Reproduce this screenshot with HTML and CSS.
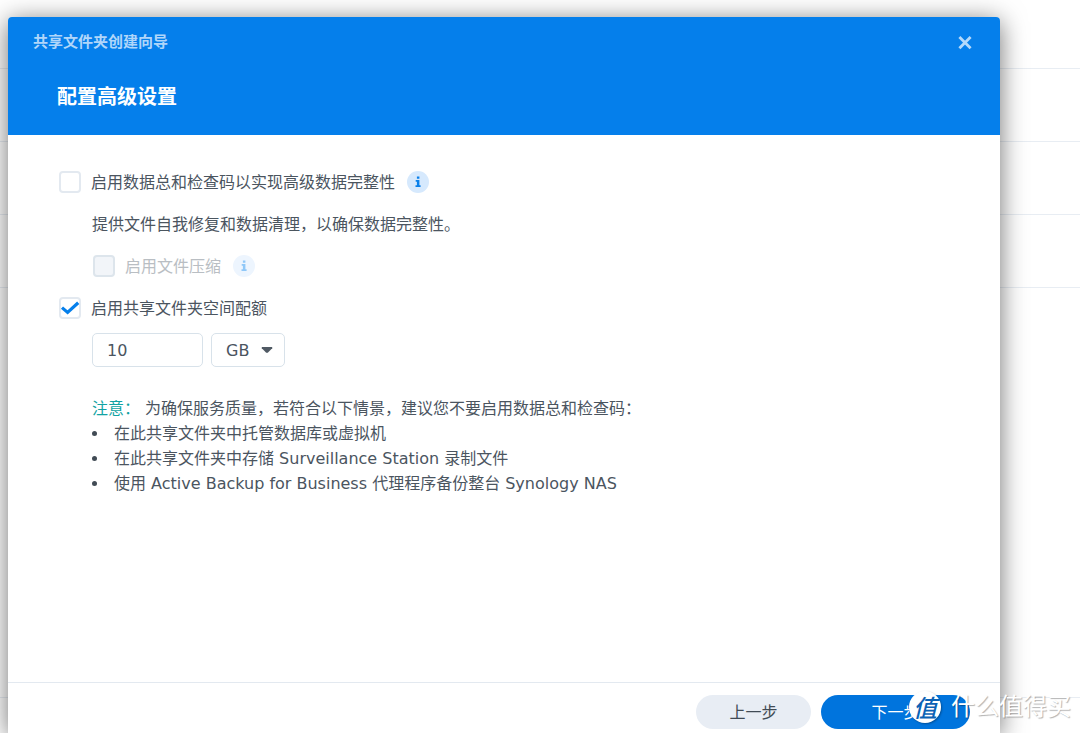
FILE: index.html
```html
<!DOCTYPE html>
<html lang="zh-CN">
<head>
<meta charset="utf-8">
<title>共享文件夹创建向导</title>
<link rel="stylesheet" href="styles.css">
</head>
<body>
<div class="backdrop" aria-hidden="true">
  <div class="backdrop-row"></div>
  <div class="backdrop-row"></div>
  <div class="backdrop-row"></div>
  <div class="backdrop-row"></div>
  <div class="backdrop-rest"></div>
</div>

<main class="dialog" role="dialog" aria-labelledby="wizard-name">
  <header class="dialog-header">
    <div class="title-bar">
      <span class="wizard-name" id="wizard-name">共享文件夹创建向导</span>
      <button class="close" type="button" aria-label="关闭">
        <svg width="14" height="14" viewBox="0 0 14 14"><path d="M1.4 1 12.6 12.2M12.6 1 1.4 12.2" fill="none" stroke="currentColor" stroke-width="2.8"/></svg>
      </button>
    </div>
    <h1 class="step-title">配置高级设置</h1>
  </header>

  <form class="dialog-body">
    <div class="option">
      <input class="check" type="checkbox" id="checksum">
      <label for="checksum">启用数据总和检查码以实现高级数据完整性</label>
      <button class="info" type="button" aria-label="说明">
        <svg width="22" height="22" viewBox="0 0 22 22"><circle cx="11" cy="11" r="11" fill="#d6e9fd"/><path d="M9.9 5.6h2.5v2.1H9.9zM8.7 9h3.7v5.3h1.2V16H8.5v-1.7h1.4v-3.6H8.7z" fill="#0a80ea"/></svg>
      </button>
    </div>
    <p class="option description">提供文件自我修复和数据清理，以确保数据完整性。</p>
    <div class="option option-nested">
      <input class="check" type="checkbox" id="compress" disabled>
      <label class="disabled" for="compress">启用文件压缩</label>
      <button class="info" type="button" aria-label="说明" disabled>
        <svg width="22" height="22" viewBox="0 0 22 22"><circle cx="11" cy="11" r="11" fill="#edf5fe"/><path d="M9.9 5.6h2.5v2.1H9.9zM8.7 9h3.7v5.3h1.2V16H8.5v-1.7h1.4v-3.6H8.7z" fill="#90c8f8"/></svg>
      </button>
    </div>
    <div class="option">
      <span class="check-wrap">
        <input class="check" type="checkbox" id="quota" checked>
        <svg class="tick" width="22" height="22" viewBox="0 0 22 22"><path d="M3 10.6 8.6 15.4 19.2 5.8" fill="none" stroke="#057feb" stroke-width="3.2"/></svg>
      </span>
      <label for="quota">启用共享文件夹空间配额</label>
    </div>
    <div class="quota">
      <input class="field quota-size" type="text" value="10" aria-label="配额大小">
      <span class="select-wrap">
        <select class="field quota-unit" aria-label="单位"><option>GB</option><option>TB</option></select>
        <svg class="arrow" width="12" height="7" viewBox="0 0 12 7"><path d="M.8 0h10.4v1.2L6.8 5.8H5.2L.8 1.2z" fill="#505a64"/></svg>
      </span>
    </div>
    <section class="notes">
      <p class="note-lead"><span class="note-label">注意：</span> 为确保服务质量，若符合以下情景，建议您不要启用数据总和检查码：</p>
      <ul class="note-list">
        <li>在此共享文件夹中托管数据库或虚拟机</li>
        <li>在此共享文件夹中存储 Surveillance Station 录制文件</li>
        <li>使用 Active Backup for Business 代理程序备份整台 Synology NAS</li>
      </ul>
    </section>
  </form>

  <footer class="dialog-footer">
    <button class="button" type="button">上一步</button>
    <button class="button button-primary" type="button">下一步</button>
  </footer>
</main>

<div class="watermark">
  <span class="watermark-logo">值</span>
  <span class="watermark-name">什么值得买</span>
</div>
</body>
</html>
```
FILE: styles.css
```css
* {
  box-sizing: border-box;
}

body {
  position: relative;
  display: flex;
  min-height: 100vh;
  margin: 0;
  padding: 17px 80px 0 8px;
  overflow: hidden;
  background: #fff;
  color: #4b555f;
  font: 16px/25px "DejaVu Sans", "Noto Sans CJK SC", sans-serif;
}

h1,
p,
ul {
  margin: 0;
  padding: 0;
}

button,
input,
select {
  margin: 0;
  font: inherit;
}

/* List behind the dialog */
.backdrop {
  position: absolute;
  inset: 0;
  display: flex;
  flex-direction: column;
  padding-bottom: 35px;
}

.backdrop-row {
  height: 73px;
  border-bottom: 1px solid #e8edf3;
}

.backdrop-row:first-child {
  height: 69px;
}

.backdrop-rest {
  flex: 1;
  border-bottom: 1px solid #e8edf3;
}

/* Dialog */
.dialog {
  position: relative;
  display: flex;
  flex: 1;
  flex-direction: column;
  border-radius: 4px 4px 0 0;
  background: #fff;
  box-shadow: 0 4px 26px rgba(0, 0, 0, 0.56);
}

.dialog-header {
  height: 118px;
  padding: 13px 25px 0;
  border-radius: 4px 4px 0 0;
  background: #057feb;
  color: #fff;
}

.title-bar {
  display: flex;
  align-items: center;
  justify-content: space-between;
}

.wizard-name {
  color: #b0d6fa;
  font-size: 15px;
  font-weight: bold;
}

.close {
  display: flex;
  padding: 3px;
  border: 0;
  background: none;
  color: #b4d9fb;
}

.step-title {
  margin-top: 27px;
  padding-left: 24px;
  font-size: 20px;
  line-height: 30px;
}

.dialog-body {
  flex: 1;
  padding: 26px 51px;
}

.option {
  display: flex;
  align-items: center;
  height: 42px;
}

.option label {
  padding-left: 10px;
}

.description,
.quota,
.notes {
  margin-left: 33px;
}

.option-nested {
  margin-left: 34px;
}

.check {
  display: block;
  width: 22px;
  height: 22px;
  appearance: none;
  border: 2px solid #e3e9f0;
  border-radius: 4px;
  background: #fff;
}

.check:disabled {
  border-color: #dde5ec;
  background: #f2f5f9;
}

.check-wrap,
.select-wrap {
  position: relative;
}

.tick {
  position: absolute;
  inset: 0;
  pointer-events: none;
}

.disabled {
  color: #b9bec3;
}

.info {
  display: flex;
  margin-left: 12px;
  padding: 0;
  border: 0;
  background: none;
}

.quota {
  display: flex;
  gap: 8px;
  margin-top: 4px;
}

.field {
  display: block;
  height: 34px;
  padding: 0 14px;
  border: 1px solid #d8e2ea;
  border-radius: 5px;
  background: #fff;
  color: inherit;
}

.quota-size {
  width: 111px;
}

.quota-unit {
  width: 74px;
  appearance: none;
}

.arrow {
  position: absolute;
  top: 14px;
  right: 12px;
  pointer-events: none;
}

.notes {
  margin-top: 29px;
}

.note-label {
  color: #12a3a3;
}

.note-list {
  list-style: none;
}

.note-list li {
  display: flex;
  align-items: center;
  gap: 17px;
}

.note-list li::before {
  width: 5px;
  height: 5px;
  border-radius: 50%;
  background: #414b55;
  content: "";
}

.dialog-footer {
  display: flex;
  justify-content: flex-end;
  gap: 10px;
  padding: 12px 30px 4px;
  border-top: 1px solid #e3e9f0;
}

.button {
  width: 115px;
  height: 34px;
  border: 0;
  border-radius: 17px;
  background: #e8edf4;
  color: #414b55;
}

.button-primary {
  width: 149px;
  background: #0074dd;
  color: #fff;
}

/* Site mark over the lower right corner */
.watermark {
  position: absolute;
  right: 9px;
  bottom: 8px;
  display: flex;
  align-items: center;
  gap: 10px;
  pointer-events: none;
}

.watermark-logo {
  width: 32px;
  height: 32px;
  border-radius: 50%;
  background: #fff;
  box-shadow: 1px 1px 2px rgba(0, 0, 0, 0.3);
  color: #0b62b5;
  font-family: "Noto Sans CJK SC", sans-serif;
  font-size: 24px;
  font-style: italic;
  font-weight: 500;
  line-height: 32px;
  text-align: center;
}

.watermark-name {
  color: #fff;
  font-size: 24px;
  line-height: 36px;
  text-shadow: 1px 1px 1px rgba(0, 0, 0, 0.3);
}
```
